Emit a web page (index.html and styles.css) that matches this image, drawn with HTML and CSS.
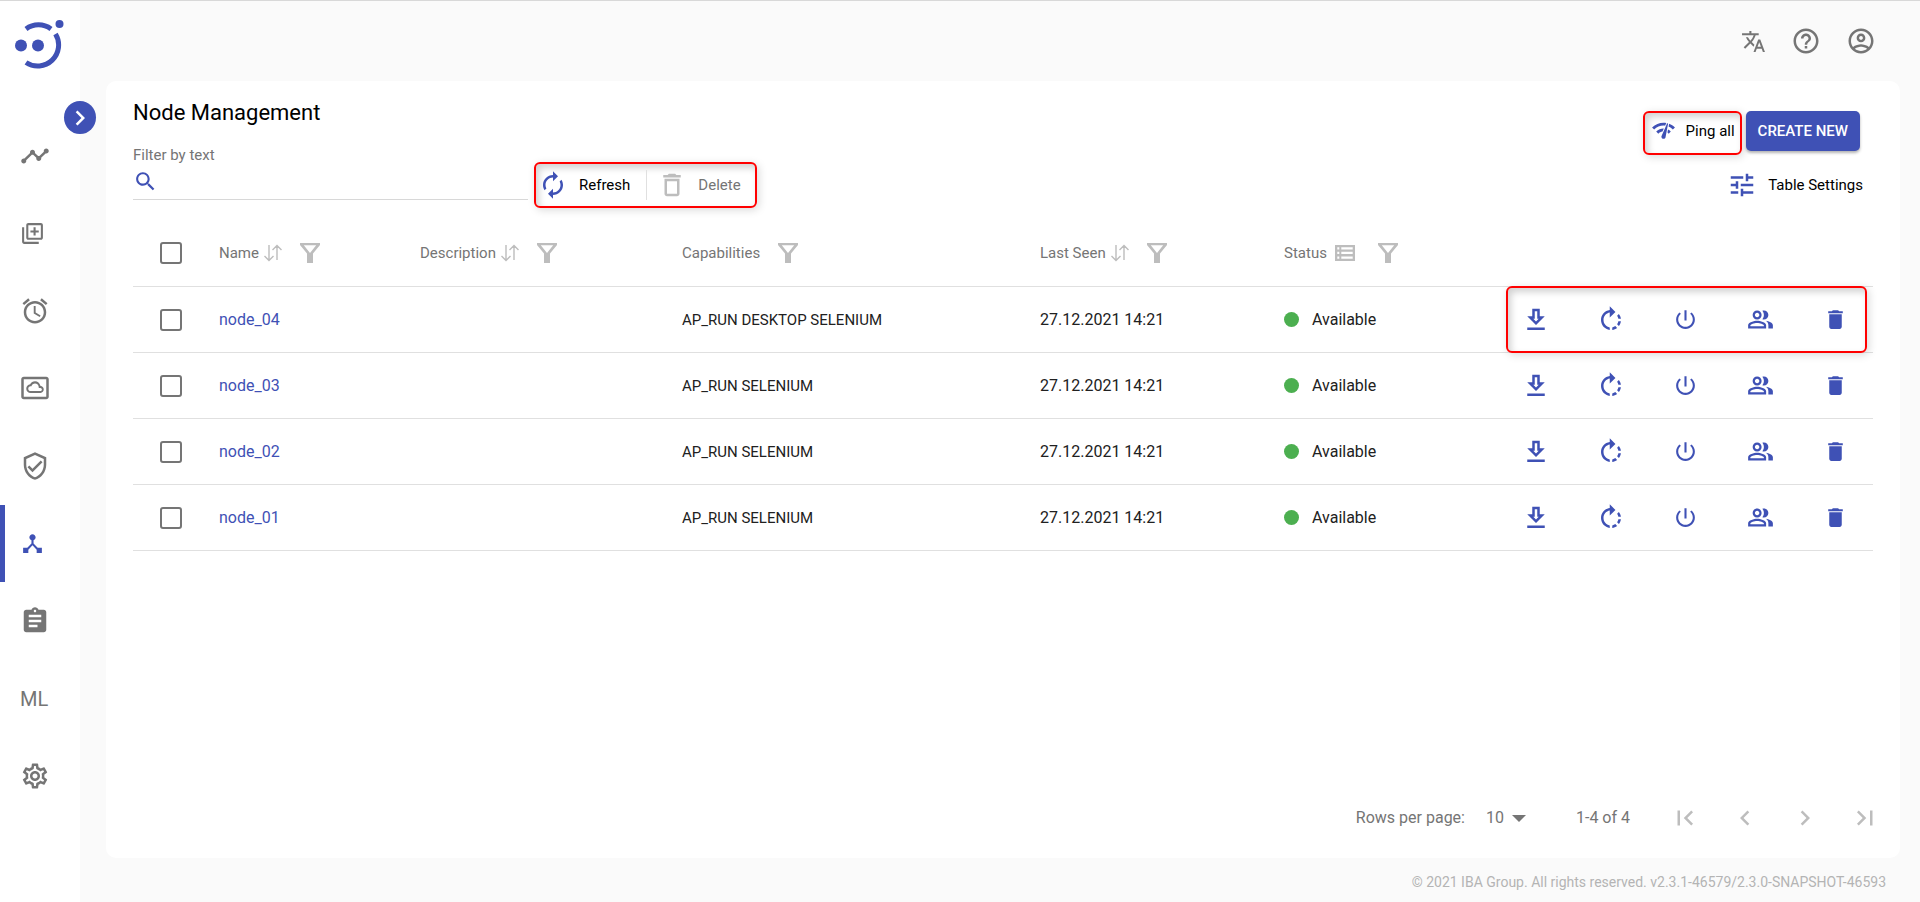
FILE: index.html
```html
<!DOCTYPE html>
<html lang="en">
  <head>
    <meta charset="UTF-8">
    <title>Node Management</title>
    <link rel="stylesheet" href="styles.css">
  </head>
  <body>
    <svg class="sprite" aria-hidden="true">
      <symbol id="i-trend" viewBox="0 0 24 24"><path d="M23 8c0 1.100-.9 2-2 2-.18 0-.35-.02-.51-.07l-3.560 3.550c.05.16.07.34.07.52 0 1.100-.9 2-2 2s-2-.9-2-2c0-.18.02-.36.07-.52l-2.550-2.550c-.16.05-.34.07-.52.07s-.36-.02-.52-.07l-4.550 4.560c.05.16.07.33.07.51 0 1.100-.9 2-2 2s-2-.9-2-2 .9-2 2-2c.18 0 .35.02.51.07l4.560-4.550C8.020 9.360 8 9.180 8 9c0-1.100.9-2 2-2s2 .9 2 2c0 .18-.02.36-.07.52l2.550 2.550c.16-.05.34-.07.52-.07s.36.02.52.07l3.550-3.560C19.020 8.350 19 8.180 19 8c0-1.100.9-2 2-2s2 .9 2 2z"/></symbol>
      <symbol id="i-library" viewBox="0 0 24 24"><path d="M4 6H2v14c0 1.100.9 2 2 2h14v-2H4V6zm16-4H8c-1.100 0-2 .9-2 2v12c0 1.100.9 2 2 2h12c1.100 0 2-.9 2-2V4c0-1.100-.9-2-2-2zm0 14H8V4h12v12zm-7-2h2v-3h3V9h-3V6h-2v3h-3v2h3z"/></symbol>
      <symbol id="i-alarm" viewBox="0 0 24 24"><path d="M22 5.720l-4.600-3.860-1.290 1.530 4.600 3.860L22 5.720zM7.880 3.390L6.600 1.860 2 5.710l1.290 1.530 4.590-3.850zM12.500 8H11v6l4.750 2.850.75-1.230-4-2.370V8zM12 4c-4.970 0-9 4.030-9 9s4.020 9 9 9c4.970 0 9-4.030 9-9s-4.030-9-9-9zm0 16c-3.870 0-7-3.130-7-7s3.130-7 7-7 7 3.130 7 7-3.130 7-7 7z"/></symbol>
      <symbol id="i-cloud" viewBox="0 0 24 24"><path d="M16.500 16h-8C6.570 16 5 14.430 5 12.500c0-1.800 1.360-3.290 3.120-3.480.73-1.400 2.190-2.360 3.880-2.360 2.120 0 3.890 1.510 4.290 3.520C17.810 10.370 19 11.550 19 13.080 19 14.690 17.880 16 16.500 16zm-8-5.400c-1.050 0-1.900.85-1.900 1.900s.85 1.900 1.900 1.900h8c.6 0 1-.6 1-1.250s-.55-1.250-1.250-1.250H15v-.5c0-1.650-1.350-3-3-3-1.320 0-2.430.87-2.830 2.200H8.500z"/><path d="M21 3H3c-1.100 0-2 .9-2 2v14c0 1.100.9 2 2 2h18c1.100 0 2-.9 2-2V5c0-1.100-.9-2-2-2zm0 16H3V5h18v14z"/></symbol>
      <symbol id="i-shield" viewBox="0 0 24 24"><path d="M12 1L3 5v6c0 5.550 3.840 10.740 9 12 5.160-1.260 9-6.450 9-12V5l-9-4zm7 10c0 4.520-2.980 8.690-7 9.930-4.020-1.240-7-5.410-7-9.930V6.300l7-3.110 7 3.110V11zm-11.590.59L6 13l4 4 8-8-1.410-1.420L10 14.170z"/></symbol>
      <symbol id="i-hub" viewBox="0 0 24 24"><path d="M17 16l-4-4V8.820C14.160 8.400 15 7.300 15 6c0-1.660-1.340-3-3-3S9 4.340 9 6c0 1.300.84 2.400 2 2.820V12l-4 4H3v5h5v-3.050l4-4.200 4 4.200V21h5v-5h-4z"/></symbol>
      <symbol id="i-clipboard" viewBox="0 0 24 24"><path d="M19 3h-4.180C14.400 1.840 13.300 1 12 1c-1.300 0-2.400.84-2.820 2H5c-1.100 0-2 .9-2 2v14c0 1.100.9 2 2 2h14c1.100 0 2-.9 2-2V5c0-1.100-.9-2-2-2zm-7 0c.55 0 1 .45 1 1s-.45 1-1 1-1-.45-1-1 .45-1 1-1zm2 14H7v-2h7v2zm3-4H7v-2h10v2zm0-4H7V7h10v2z"/></symbol>
      <symbol id="i-gear" viewBox="0 0 24 24"><path d="M19.430 12.980c.04-.32.07-.64.07-.98 0-.34-.03-.66-.07-.98l2.110-1.650c.19-.15.24-.42.12-.64l-2-3.460c-.09-.16-.26-.25-.44-.25-.06 0-.12.01-.17.03l-2.490 1c-.52-.4-1.080-.73-1.690-.98l-.38-2.650C14.460 2.180 14.250 2 14 2h-4c-.25 0-.46.18-.49.42l-.38 2.650c-.61.25-1.170.59-1.690.98l-2.490-1c-.06-.02-.12-.03-.18-.03-.17 0-.34.09-.43.25l-2 3.460c-.13.22-.07.49.12.64l2.110 1.650c-.04.32-.07.65-.07.98 0 .33.03.66.07.98l-2.110 1.650c-.19.15-.24.42-.12.64l2 3.460c.09.16.26.25.44.25.06 0 .12-.01.17-.03l2.490-1c.52.4 1.080.73 1.690.98l.38 2.650c.03.24.24.42.49.42h4c.25 0 .46-.18.49-.42l.38-2.650c.61-.25 1.170-.59 1.690-.98l2.490 1c.06.02.12.03.18.03.17 0 .34-.09.43-.25l2-3.460c.12-.22.07-.49-.12-.64l-2.110-1.650zm-1.980-1.710c.04.31.05.52.05.73 0 .21-.02.43-.05.73l-.14 1.130.89.7 1.080.84-.7 1.210-1.270-.51-1.040-.42-.9.68c-.43.32-.84.56-1.250.73l-1.060.43-.16 1.130-.2 1.350h-1.400l-.19-1.350-.16-1.130-1.060-.43c-.43-.18-.83-.41-1.230-.71l-.91-.7-1.060.43-1.270.51-.7-1.210 1.080-.84.89-.7-.14-1.130c-.03-.31-.05-.54-.05-.74s.02-.43.05-.73l.14-1.130-.89-.7-1.080-.84.7-1.210 1.270.51 1.040.42.9-.68c.43-.32.84-.56 1.250-.73l1.060-.43.16-1.130.2-1.350h1.390l.19 1.350.16 1.130 1.060.43c.43.18.83.41 1.230.71l.91.7 1.060-.43 1.270-.51.7 1.210-1.070.85-.89.7.14 1.130zM12 8c-2.210 0-4 1.790-4 4s1.790 4 4 4 4-1.790 4-4-1.790-4-4-4zm0 6c-1.100 0-2-.9-2-2s.9-2 2-2 2 .9 2 2-.9 2-2 2z"/></symbol>
      <symbol id="i-chevron" viewBox="0 0 24 24"><path d="M10 6L8.590 7.410 13.170 12l-4.580 4.590L10 18l6-6z"/></symbol>
      <symbol id="i-chevron-left" viewBox="0 0 24 24"><path d="M15.410 7.410L14 6l-6 6 6 6 1.410-1.410L10.830 12z"/></symbol>
      <symbol id="i-first" viewBox="0 0 24 24"><path d="M18.410 16.590L13.820 12l4.590-4.590L17 6l-6 6 6 6zM6 6h2v12H6z"/></symbol>
      <symbol id="i-last" viewBox="0 0 24 24"><path d="M5.590 7.410L10.180 12l-4.590 4.590L7 18l6-6-6-6zM16 6h2v12h-2z"/></symbol>
      <symbol id="i-translate" viewBox="0 0 24 24"><path d="M12.870 15.070l-2.540-2.510.03-.03c1.740-1.940 2.980-4.170 3.710-6.530H17V4h-7V2H8v2H1v1.990h11.170C11.500 7.920 10.440 9.750 9 11.350 8.070 10.320 7.300 9.190 6.690 8h-2c.73 1.630 1.730 3.170 2.980 4.560l-5.090 5.020L4 19l5-5 3.110 3.110.76-2.040zM18.500 10h-2L12 22h2l1.120-3h4.750L21 22h2l-4.500-12zm-2.620 7l1.620-4.330L19.120 17h-3.240z"/></symbol>
      <symbol id="i-help" viewBox="0 0 24 24"><path d="M11 18h2v-2h-2v2zm1-16C6.480 2 2 6.480 2 12s4.480 10 10 10 10-4.480 10-10S17.520 2 12 2zm0 18c-4.410 0-8-3.590-8-8s3.590-8 8-8 8 3.590 8 8-3.590 8-8 8zm0-14c-2.210 0-4 1.790-4 4h2c0-1.100.9-2 2-2s2 .9 2 2c0 2-3 1.750-3 5h2c0-2.250 3-2.500 3-5 0-2.210-1.790-4-4-4z"/></symbol>
      <symbol id="i-account" viewBox="0 0 24 24"><path d="M12 2C6.480 2 2 6.480 2 12s4.480 10 10 10 10-4.480 10-10S17.520 2 12 2zM7.070 18.280c.43-.9 3.050-1.780 4.930-1.780s4.510.88 4.930 1.780C15.570 19.360 13.860 20 12 20s-3.570-.64-4.930-1.720zm11.290-1.450c-1.430-1.740-4.900-2.330-6.360-2.330s-4.930.59-6.360 2.330C4.620 15.490 4 13.820 4 12c0-4.410 3.590-8 8-8s8 3.590 8 8c0 1.820-.62 3.490-1.640 4.830zM12 6c-1.940 0-3.500 1.560-3.500 3.500S10.060 13 12 13s3.500-1.560 3.500-3.500S13.940 6 12 6zm0 5c-.83 0-1.500-.67-1.500-1.500S11.170 8 12 8s1.500.67 1.500 1.500S12.830 11 12 11z"/></symbol>
      <symbol id="i-search" viewBox="0 0 24 24"><path d="M15.500 14h-.79l-.28-.27C15.410 12.590 16 11.110 16 9.500 16 5.910 13.090 3 9.500 3S3 5.910 3 9.500 5.910 16 9.500 16c1.610 0 3.090-.59 4.230-1.570l.27.28v.79l5 4.990L20.490 19l-4.990-5zm-6 0C7.010 14 5 11.990 5 9.500S7.010 5 9.500 5 14 7.010 14 9.500 11.990 14 9.500 14z"/></symbol>
      <symbol id="i-refresh" viewBox="0 0 24 24"><path d="M12 6v3l4-4-4-4v3c-4.420 0-8 3.580-8 8 0 1.570.46 3.030 1.240 4.260L6.700 14.800c-.45-.83-.7-1.790-.7-2.800 0-3.310 2.690-6 6-6zm6.760 1.740L17.300 9.200c.44.84.7 1.790.7 2.800 0 3.310-2.690 6-6 6v-3l-4 4 4 4v-3c4.420 0 8-3.580 8-8 0-1.570-.46-3.030-1.240-4.260z"/></symbol>
      <symbol id="i-delete" viewBox="0 0 24 24"><path d="M6 19c0 1.100.9 2 2 2h8c1.100 0 2-.9 2-2V7H6v12zM8 9h8v10H8V9zm7.500-5l-1-1h-5l-1 1H5v2h14V4z"/></symbol>
      <symbol id="i-ping" viewBox="0 0 24 24"><path d="M15.900 5c-.17 0-.32.09-.41.23l-.07.15-5.180 11.650c-.16.29-.26.61-.26.96 0 1.110.9 2.010 2.010 2.010.96 0 1.770-.68 1.960-1.590l.01-.03L16.400 5.500c0-.28-.22-.5-.5-.5zM1 9l2 2c2.880-2.880 6.790-4.080 10.530-3.620l1.190-2.680C9.890 3.840 4.740 5.270 1 9zm20 2l2-2c-1.640-1.640-3.550-2.820-5.590-3.570l-.53 2.820c1.500.62 2.900 1.530 4.120 2.750zm-4 4l2-2c-.8-.8-1.700-1.420-2.660-1.890l-.55 2.920c.42.27.83.59 1.210.97zM5 13l2 2c1.130-1.130 2.560-1.790 4.030-2l1.280-2.880c-2.630-.08-5.300.87-7.310 2.880z"/></symbol>
      <symbol id="i-tune" viewBox="0 0 24 24"><path d="M3 17v2h6v-2H3zM3 5v2h10V5H3zm10 16v-2h8v-2h-8v-2h-2v6h2zM7 9v2H3v2h4v2h2V9H7zm14 4v-2H11v2h10zm-6-4h2V7h4V5h-4V3h-2v6z"/></symbol>
      <symbol id="i-sort" viewBox="0 0 18 18"><path d="M5 1v15.500M.5 12L5 16.500 9.500 12M13 16V1.500M8.500 6L13 1.500 17.500 6" fill="none" stroke="currentColor" stroke-width="1.400"/></symbol>
      <symbol id="i-filter" viewBox="0 0 20 20"><path d="M0 0h20v2l-7 8.500V20H7v-9.500L0 2zM3.800 2.200L10 10l6.200-7.800z" fill-rule="evenodd"/></symbol>
      <symbol id="i-list" viewBox="0 0 20 16"><path d="M0 0h20v16H0zM2.300 2.300v2.200h2V2.300zM6.300 2.300v2.200h11.400V2.300zM2.300 6.800v2.300h2V6.800zM6.300 6.800v2.300h11.400V6.800zM2.300 11.400v2.300h2v-2.300zM6.300 11.400v2.300h11.400v-2.300z" fill-rule="evenodd"/></symbol>
      <symbol id="i-download" viewBox="0 0 24 24"><path d="M19 9h-4V3H9v6H5l7 7 7-7zm-8 2V5h2v6h1.170L12 13.170 9.830 11H11zm-6 7h14v2H5z"/></symbol>
      <symbol id="i-restart" viewBox="0 0 24 24"><path d="M15.550 5.550L11 1v3.070C7.060 4.560 4 7.920 4 12s3.050 7.440 7 7.930v-2.020c-2.840-.48-5-2.940-5-5.910s2.160-5.430 5-5.910V10l4.550-4.450zM19.930 11c-.17-1.390-.72-2.730-1.620-3.890l-1.420 1.420c.54.75.88 1.600 1.020 2.470h2.020zM13 17.900v2.020c1.390-.17 2.740-.71 3.900-1.610l-1.440-1.440c-.75.54-1.590.89-2.460 1.030zm3.890-2.420l1.420 1.410c.9-1.160 1.450-2.500 1.620-3.890h-2.020c-.14.87-.48 1.720-1.020 2.480z"/></symbol>
      <symbol id="i-power" viewBox="0 0 24 24"><path d="M13 3h-2v10h2V3zm4.830 2.170l-1.420 1.420C17.990 7.860 19 9.810 19 12c0 3.870-3.130 7-7 7s-7-3.130-7-7c0-2.190 1.010-4.140 2.580-5.420L6.170 5.170C4.230 6.820 3 9.260 3 12c0 4.970 4.030 9 9 9s9-4.030 9-9c0-2.740-1.230-5.180-3.170-6.830z"/></symbol>
      <symbol id="i-people" viewBox="0 0 24 24"><path d="M16.670 13.130C18.040 14.060 19 15.320 19 17v3h4v-3c0-2.180-3.570-3.470-6.330-3.870zM15 12c2.210 0 4-1.790 4-4s-1.790-4-4-4c-.47 0-.91.1-1.330.24C14.500 5.270 15 6.580 15 8s-.5 2.730-1.330 3.760c.42.14.86.24 1.330.24zM9 12c2.210 0 4-1.790 4-4s-1.790-4-4-4-4 1.790-4 4 1.790 4 4 4zm0-6c1.100 0 2 .9 2 2s-.9 2-2 2-2-.9-2-2 .9-2 2-2zM9 13c-2.670 0-8 1.340-8 4v3h16v-3c0-2.660-5.330-4-8-4zm6 5H3v-.99C3.200 16.290 6.300 15 9 15s5.800 1.290 6 2v1z"/></symbol>
      <symbol id="i-trash" viewBox="0 0 24 24"><path d="M6 19c0 1.100.9 2 2 2h8c1.100 0 2-.9 2-2V7H6v12zM19 4h-3.500l-1-1h-5l-1 1H5v2h14V4z"/></symbol>
    </svg>

    <aside class="sidebar">
      <a class="logo" href="#" aria-label="Home">
        <svg width="50" height="50" viewBox="0 0 50 50">
          <g fill="none" stroke="#3f51b5" stroke-width="5">
            <path d="M11 10a21 21 0 0 1 25 0"/>
            <path d="M40.500 15a21 21 0 0 1-29.500 28.500"/>
          </g>
          <circle cx="6" cy="26.500" r="6"/>
          <circle cx="23" cy="26.500" r="6"/>
          <circle cx="44.500" cy="5" r="4"/>
        </svg>
      </a>
      <button class="toggle" aria-label="Expand menu"><svg class="lg"><use href="#i-chevron"/></svg></button>
      <nav>
        <a href="#" aria-label="Statistics"><svg class="lg"><use href="#i-trend"/></svg></a>
        <a href="#" aria-label="Processes"><svg><use href="#i-library"/></svg></a>
        <a href="#" aria-label="Scheduler"><svg class="lg"><use href="#i-alarm"/></svg></a>
        <a href="#" aria-label="Storage"><svg class="lg"><use href="#i-cloud"/></svg></a>
        <a href="#" aria-label="Secrets"><svg class="lg"><use href="#i-shield"/></svg></a>
        <a href="#" class="active" aria-label="Nodes"><svg><use href="#i-hub"/></svg></a>
        <a href="#" aria-label="Tasks"><svg class="lg"><use href="#i-clipboard"/></svg></a>
        <a href="#">ML</a>
        <a href="#" aria-label="Settings"><svg class="lg"><use href="#i-gear"/></svg></a>
      </nav>
    </aside>

    <div class="page">
      <header class="topbar">
        <button aria-label="Language"><svg><use href="#i-translate"/></svg></button>
        <button aria-label="Help"><svg class="lg"><use href="#i-help"/></svg></button>
        <button aria-label="Account"><svg class="lg"><use href="#i-account"/></svg></button>
      </header>

      <main class="card">
        <div class="card-head">
          <div class="head-left">
            <h1>Node Management</h1>
            <div class="tools">
              <div class="filter">
                <label for="filter">Filter by text</label>
                <div class="field">
                  <svg><use href="#i-search"/></svg>
                  <input type="text" id="filter">
                </div>
              </div>
              <div class="actions marked">
                <button><svg class="lg"><use href="#i-refresh"/></svg>Refresh</button>
                <button disabled><svg class="lg"><use href="#i-delete"/></svg>Delete</button>
              </div>
            </div>
          </div>
          <div class="head-right">
            <div class="create-row">
              <button class="ping marked"><svg><use href="#i-ping"/></svg>Ping all</button>
              <button class="create">CREATE NEW</button>
            </div>
            <button class="settings"><svg class="lg"><use href="#i-tune"/></svg>Table Settings</button>
          </div>
        </div>

        <table>
          <colgroup>
            <col class="c-check"><col class="c-name"><col class="c-desc"><col class="c-cap">
            <col class="c-seen"><col class="c-status"><col class="c-actions">
          </colgroup>
          <thead>
            <tr>
              <th><input type="checkbox" aria-label="Select all"></th>
              <th><div class="th">Name<svg class="sort"><use href="#i-sort"/></svg><svg class="funnel"><use href="#i-filter"/></svg></div></th>
              <th><div class="th">Description<svg class="sort"><use href="#i-sort"/></svg><svg class="funnel"><use href="#i-filter"/></svg></div></th>
              <th><div class="th">Capabilities<svg class="funnel"><use href="#i-filter"/></svg></div></th>
              <th><div class="th">Last Seen<svg class="sort"><use href="#i-sort"/></svg><svg class="funnel"><use href="#i-filter"/></svg></div></th>
              <th><div class="th">Status<svg class="list"><use href="#i-list"/></svg><svg class="funnel"><use href="#i-filter"/></svg></div></th>
              <th></th>
            </tr>
          </thead>
          <tbody>
            <tr>
              <td><input type="checkbox" aria-label="Select node_04"></td>
              <td><a href="#">node_04</a></td>
              <td></td>
              <td class="cap">AP_RUN DESKTOP SELENIUM</td>
              <td>27.12.2021 14:21</td>
              <td><span class="status">Available</span></td>
              <td class="row-cell">
                <div class="row-actions">
                  <button aria-label="Download"><svg class="lg"><use href="#i-download"/></svg></button>
                  <button aria-label="Restart"><svg class="lg"><use href="#i-restart"/></svg></button>
                  <button aria-label="Stop"><svg><use href="#i-power"/></svg></button>
                  <button aria-label="Users"><svg class="md"><use href="#i-people"/></svg></button>
                  <button aria-label="Delete"><svg><use href="#i-trash"/></svg></button>
                </div>
                <div class="row-mark marked"></div>
              </td>
            </tr>
            <tr>
              <td><input type="checkbox" aria-label="Select node_03"></td>
              <td><a href="#">node_03</a></td>
              <td></td>
              <td class="cap">AP_RUN SELENIUM</td>
              <td>27.12.2021 14:21</td>
              <td><span class="status">Available</span></td>
              <td>
                <div class="row-actions">
                  <button aria-label="Download"><svg class="lg"><use href="#i-download"/></svg></button>
                  <button aria-label="Restart"><svg class="lg"><use href="#i-restart"/></svg></button>
                  <button aria-label="Stop"><svg><use href="#i-power"/></svg></button>
                  <button aria-label="Users"><svg class="md"><use href="#i-people"/></svg></button>
                  <button aria-label="Delete"><svg><use href="#i-trash"/></svg></button>
                </div>
              </td>
            </tr>
            <tr>
              <td><input type="checkbox" aria-label="Select node_02"></td>
              <td><a href="#">node_02</a></td>
              <td></td>
              <td class="cap">AP_RUN SELENIUM</td>
              <td>27.12.2021 14:21</td>
              <td><span class="status">Available</span></td>
              <td>
                <div class="row-actions">
                  <button aria-label="Download"><svg class="lg"><use href="#i-download"/></svg></button>
                  <button aria-label="Restart"><svg class="lg"><use href="#i-restart"/></svg></button>
                  <button aria-label="Stop"><svg><use href="#i-power"/></svg></button>
                  <button aria-label="Users"><svg class="md"><use href="#i-people"/></svg></button>
                  <button aria-label="Delete"><svg><use href="#i-trash"/></svg></button>
                </div>
              </td>
            </tr>
            <tr>
              <td><input type="checkbox" aria-label="Select node_01"></td>
              <td><a href="#">node_01</a></td>
              <td></td>
              <td class="cap">AP_RUN SELENIUM</td>
              <td>27.12.2021 14:21</td>
              <td><span class="status">Available</span></td>
              <td>
                <div class="row-actions">
                  <button aria-label="Download"><svg class="lg"><use href="#i-download"/></svg></button>
                  <button aria-label="Restart"><svg class="lg"><use href="#i-restart"/></svg></button>
                  <button aria-label="Stop"><svg><use href="#i-power"/></svg></button>
                  <button aria-label="Users"><svg class="md"><use href="#i-people"/></svg></button>
                  <button aria-label="Delete"><svg><use href="#i-trash"/></svg></button>
                </div>
              </td>
            </tr>
          </tbody>
        </table>

        <div class="pagination">
          <label for="rows">Rows per page:</label>
          <div class="rows-select">
            <select id="rows">
              <option>10</option>
              <option>25</option>
              <option>50</option>
            </select>
          </div>
          <span class="range">1-4 of 4</span>
          <div class="pager">
            <button disabled aria-label="First page"><svg class="lg"><use href="#i-first"/></svg></button>
            <button disabled aria-label="Previous page"><svg class="lg"><use href="#i-chevron-left"/></svg></button>
            <button disabled aria-label="Next page"><svg class="lg"><use href="#i-chevron"/></svg></button>
            <button disabled aria-label="Last page"><svg class="lg"><use href="#i-last"/></svg></button>
          </div>
        </div>
      </main>

      <footer>© 2021 IBA Group. All rights reserved. v2.3.1-46579/2.3.0-SNAPSHOT-46593</footer>
    </div>
  </body>
</html>
```

FILE: styles.css
```css
* {
  box-sizing: border-box;
}

body {
  display: flex;
  min-height: 100vh;
  margin: 0;
  border-top: 1px solid #d8d8d8;
  background-color: #fafafa;
  color: #212121;
  font-family: Roboto, sans-serif;
  font-size: 16px;
  line-height: 24px;
}

button {
  display: flex;
  align-items: center;
  padding: 0;
  border: none;
  background: none;
  color: #000;
  font-family: inherit;
  font-size: 15px;
  cursor: pointer;
}

a {
  color: #3f51b5;
  text-decoration: none;
}

svg {
  flex: none;
  width: 25px;
  height: 25px;
  fill: currentColor;
}

svg.md {
  width: 27px;
  height: 27px;
}

svg.lg {
  width: 30px;
  height: 30px;
}

.sprite {
  position: absolute;
  width: 0;
  height: 0;
}

/* red callout frames */
.marked {
  border: 2px solid #f00;
  border-radius: 6px;
  box-shadow: 2px 2px 8px rgba(0, 0, 0, 0.15), inset 3px 4px 7px rgba(0, 0, 0, 0.18);
}

/* sidebar */
.sidebar {
  position: relative;
  flex: none;
  width: 80px;
  background-color: #fff;
}

.logo {
  display: block;
  height: 116px;
  padding: 18px 15px;
}

.logo svg {
  width: 50px;
  height: 50px;
}

.toggle {
  position: absolute;
  top: 100px;
  right: -16px;
  justify-content: center;
  width: 32px;
  height: 33px;
  border-radius: 50%;
  background-color: #3f51b5;
  color: #fff;
}

nav {
  display: flex;
  flex-direction: column;
  height: 698px;
}

nav a {
  display: flex;
  flex: 1;
  align-items: center;
  padding-left: 20px;
  color: #757575;
  font-size: 20px;
}

nav a.active {
  padding-left: 15px;
  border-left: 5px solid #3f51b5;
  color: #3f51b5;
}

/* content */
.page {
  display: flex;
  flex: 1;
  flex-direction: column;
  min-width: 0;
  padding: 0 20px 0 26px;
}

.topbar {
  display: flex;
  align-items: center;
  justify-content: flex-end;
  gap: 25px;
  height: 80px;
  padding-right: 24px;
}

.topbar button {
  color: #757575;
}

.card {
  display: flex;
  flex: 1;
  flex-direction: column;
  padding: 16px 27px 25px;
  border-radius: 10px;
  background-color: #fff;
}

.card-head {
  display: flex;
  justify-content: space-between;
}

h1 {
  margin: 0 0 17px;
  color: #000;
  font-size: 22px;
  font-weight: 400;
  line-height: 32px;
}

.tools {
  display: flex;
  align-items: flex-end;
  gap: 6px;
}

.filter {
  width: 395px;
  margin-bottom: 8px;
}

.filter label {
  display: block;
  color: #757575;
  font-size: 15px;
  line-height: 18px;
}

.field {
  display: flex;
  align-items: center;
  height: 36px;
  border-bottom: 1px solid #d8d8d8;
  color: #3f51b5;
}

.field input {
  flex: 1;
  border: none;
  outline: none;
  background: none;
  font: inherit;
}

.actions {
  display: flex;
  align-items: center;
  height: 46px;
}

.actions button {
  gap: 11px;
  height: 30px;
  padding: 0 16px 0 2px;
}

.actions button + button {
  padding: 0 14px 0 10px;
  border-left: 1px solid #e0e0e0;
  color: #757575;
}

.actions svg,
.ping svg,
.settings svg {
  color: #3f51b5;
}

.actions button:disabled svg {
  color: #bdbdbd;
}

.head-right {
  display: flex;
  flex-direction: column;
  align-items: flex-end;
  gap: 17px;
  padding: 14px 10px 0 0;
}

.create-row {
  display: flex;
  gap: 4px;
  padding-right: 3px;
}

.ping {
  gap: 10px;
  height: 44px;
  padding: 0 5px 5px 6px;
}

.create {
  height: 40px;
  padding: 0 12px;
  border-radius: 5px;
  background-color: #3f51b5;
  box-shadow: 0 2px 3px rgba(0, 0, 0, 0.3);
  color: #fff;
  font-weight: 500;
}

.settings {
  gap: 11px;
  height: 26px;
}

/* table */
table {
  width: 100%;
  margin-top: 12px;
  border-collapse: separate;
  border-spacing: 0;
  table-layout: fixed;
}

.c-check { width: 86px; }
.c-name { width: 201px; }
.c-desc { width: 262px; }
.c-cap { width: 358px; }
.c-seen { width: 244px; }
.c-status { width: 214px; }
.c-actions { width: 375px; }

th,
td {
  height: 66px;
  padding: 0;
  border-bottom: 1px solid #e0e0e0;
  text-align: left;
}

th {
  height: 67px;
  color: #757575;
  font-size: 15px;
  font-weight: 400;
}

.th {
  display: flex;
  align-items: center;
}

.th svg {
  color: #bdbdbd;
}

.th .sort {
  width: 18px;
  height: 18px;
  margin-left: 5px;
}

.th .list {
  width: 20px;
  height: 16px;
  margin: 0 5px 0 8px;
}

.th .funnel {
  width: 20px;
  height: 20px;
  margin-left: 18px;
}

input[type="checkbox"] {
  display: block;
  width: 22px;
  height: 22px;
  margin: 0 0 0 27px;
  border: 2px solid #757575;
  border-radius: 3px;
  appearance: none;
}

input[type="checkbox"]:checked {
  background-color: #3f51b5;
}

.cap {
  font-size: 15px;
}

.status {
  display: flex;
  align-items: center;
  gap: 13px;
}

.status::before {
  content: "";
  width: 15px;
  height: 15px;
  border-radius: 50%;
  background-color: #4caf50;
}

.row-actions {
  display: grid;
  grid-template-columns: repeat(5, 1fr);
  justify-items: center;
}

.row-actions button {
  color: #3f51b5;
}

.row-cell {
  position: relative;
}

.row-mark {
  position: absolute;
  inset: -1px 6px -1px 8px;
  pointer-events: none;
}

/* pagination */
.pagination {
  display: flex;
  align-items: center;
  justify-content: flex-end;
  margin-top: auto;
  color: #757575;
}

.rows-select {
  display: flex;
  align-items: center;
  margin-left: 21px;
}

.rows-select select {
  width: 40px;
  padding: 0;
  border: none;
  appearance: none;
  background: none;
  color: inherit;
  font: inherit;
}

.rows-select::after {
  content: "";
  margin-left: -14px;
  border: 7px solid transparent;
  border-top-color: #757575;
  border-bottom-width: 0;
  pointer-events: none;
}

.range {
  margin-left: 50px;
}

.pager {
  display: flex;
  gap: 30px;
  margin: 0 -7px 0 40px;
}

.pager button {
  color: #bdbdbd;
}

footer {
  height: 44px;
  padding-right: 14px;
  color: #b4b4b4;
  font-size: 14px;
  line-height: 48px;
  text-align: right;
}
```
